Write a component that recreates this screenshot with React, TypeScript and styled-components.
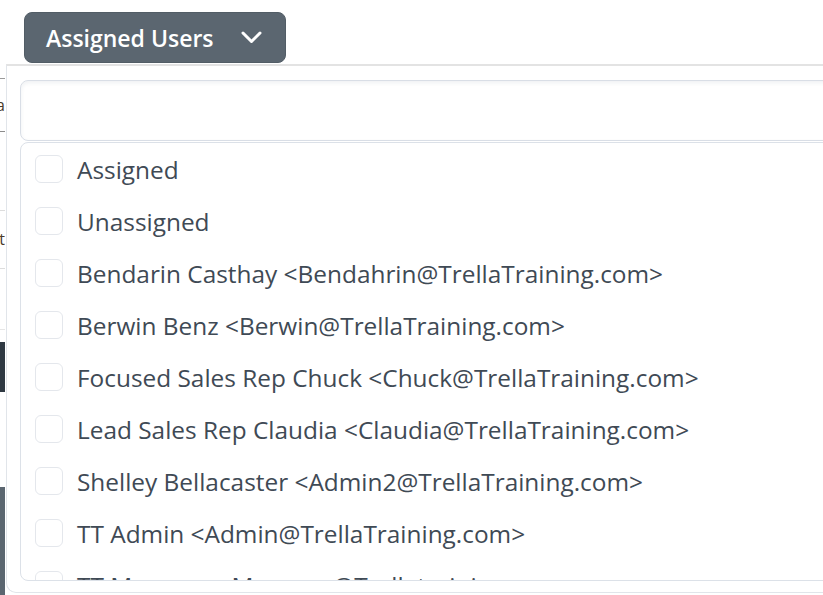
import React from "react";
import styled, { createGlobalStyle } from "styled-components";

const GlobalStyle = createGlobalStyle`
  html, body {
    margin: 0;
    padding: 0;
    background: #ffffff;
  }
  body {
    font-family: "Open Sans", "Liberation Sans", sans-serif;
  }
`;

const Screen = styled.div`
  position: relative;
  width: 823px;
  height: 595px;
  overflow: hidden;
  background: #ffffff;
`;

/* the page that sits behind the open dropdown, only a sliver shows */
const BackPage = styled.div`
  width: 5px;
  height: 595px;
  display: flex;
  flex-direction: column;
  overflow: hidden;
`;

const BackCell = styled.div<{ $h: number; $bg?: string; $line?: string }>`
  height: ${(p) => p.$h}px;
  flex-shrink: 0;
  background: ${(p) => p.$bg || "transparent"};
  border-bottom: ${(p) => (p.$line ? `1px solid ${p.$line}` : "none")};
  font-size: 16px;
  line-height: ${(p) => p.$h}px;
  color: #4a3b2a;
  overflow: hidden;
  white-space: nowrap;
  direction: rtl;
`;

const Dropdown = styled.div`
  position: absolute;
  inset: 0;
  display: flex;
  flex-direction: column;
  padding-top: 12px;
`;

const Toggle = styled.button`
  align-self: flex-start;
  margin-left: 24px;
  width: 262px;
  height: 51px;
  display: flex;
  align-items: center;
  justify-content: space-between;
  padding: 0 23px 0 21px;
  box-sizing: border-box;
  background: #5b6670;
  border: 1px solid #525d66;
  border-radius: 8px;
  color: #ffffff;
  font-family: "Open Sans", "Liberation Sans", sans-serif;
  font-weight: 600;
  font-size: 23px;
  cursor: pointer;
`;

const Menu = styled.div`
  margin: 1px -40px 2px 6px;
  flex: 1;
  display: flex;
  flex-direction: column;
  gap: 1px;
  padding: 14px 0 0 13px;
  background: #ffffff;
  border-top: 2px solid #e3e3e3;
  border-left: 1px solid #e1e5ea;
  border-bottom: 1px solid #e1e5ea;
  border-radius: 0 0 0 10px;
`;

const Search = styled.input`
  height: 61px;
  box-sizing: border-box;
  border: 1px solid #d9dee6;
  border-radius: 8px;
  box-shadow: inset 0 2px 4px rgba(30, 50, 80, 0.07);
  outline: none;
  padding: 0 14px;
  font-family: "Open Sans", "Liberation Sans", sans-serif;
  font-size: 24px;
  color: #3f4a54;
`;

const List = styled.div`
  height: 439px;
  box-sizing: border-box;
  border: 1px solid #dce1e8;
  border-radius: 8px;
  padding: 0 0 0 14px;
  overflow: hidden;
`;

const Option = styled.label`
  height: 52px;
  display: flex;
  align-items: center;
  gap: 14px;
  font-size: 24.4px;
  color: #3f4a55;
  white-space: nowrap;
  cursor: pointer;
`;

const Box = styled.span`
  width: 26px;
  height: 26px;
  flex-shrink: 0;
  border: 1px solid #e4e7ec;
  border-radius: 6px;
  background: #ffffff;
`;

const Chevron = () => (
  <svg width="21" height="13" viewBox="0 0 21 13" fill="none">
    <polyline
      points="2,2 10.5,10.5 19,2"
      stroke="#ffffff"
      strokeWidth="3"
      strokeLinecap="round"
      strokeLinejoin="round"
    />
  </svg>
);

const options = [
  "Assigned",
  "Unassigned",
  "Bendarin Casthay <Bendahrin@TrellaTraining.com>",
  "Berwin Benz <Berwin@TrellaTraining.com>",
  "Focused Sales Rep Chuck <Chuck@TrellaTraining.com>",
  "Lead Sales Rep Claudia <Claudia@TrellaTraining.com>",
  "Shelley Bellacaster <Admin2@TrellaTraining.com>",
  "TT Admin <Admin@TrellaTraining.com>",
  "TT Manager <Manager@Trellatraining.com>",
];

export default function App() {
  return (
    <>
      <GlobalStyle />
      <Screen>
        <BackPage>
          <BackCell $h={78} $line="#9a9a9a" />
          <BackCell $h={52} $line="#8c8c8c">a</BackCell>
          <BackCell $h={78} $line="#dddddd" />
          <BackCell $h={57} $line="#dddddd">t</BackCell>
          <BackCell $h={60} $line="#e6e6e6" />
          <BackCell $h={12} />
          <BackCell $h={50} $bg="#2f3942" />
          <BackCell $h={95} />
          <BackCell $h={113} $bg="#5b6670" />
        </BackPage>
        <Dropdown>
          <Toggle>
            Assigned Users
            <Chevron />
          </Toggle>
          <Menu>
            <Search />
            <List>
              {options.map((o) => (
                <Option key={o}>
                  <Box />
                  {o}
                </Option>
              ))}
            </List>
          </Menu>
        </Dropdown>
      </Screen>
    </>
  );
}
